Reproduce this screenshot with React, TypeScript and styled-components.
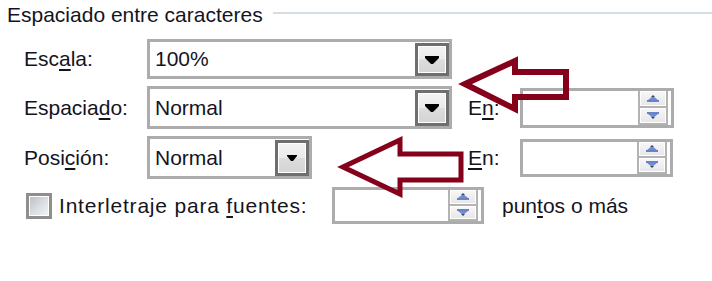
import styled, { createGlobalStyle } from 'styled-components'

const GlobalStyle = createGlobalStyle`
  html, body {
    margin: 0;
    padding: 0;
    background: #ffffff;
  }
  body {
    font-family: 'Liberation Sans', Arial, sans-serif;
    font-size: 21px;
    color: #14141e;
  }
`

const Page = styled.div`
  position: relative;
  width: 712px;
  height: 281px;
  overflow: hidden;
  background: #ffffff;
`

const TitleRow = styled.div`
  display: flex;
  align-items: center;
  height: 30px;
  padding-left: 7px;
`

const Title = styled.span`
  line-height: 30px;
  white-space: nowrap;
`

const TitleLine = styled.div`
  flex: 1;
  height: 2px;
  margin: 0 0 4px 10px;
  background: #d6dee4;
`

const Form = styled.div`
  display: flex;
  flex-direction: column;
  gap: 7px;
  margin-top: 9px;
  padding-left: 24px;
`

const FieldRow = styled.div<{ $height: number }>`
  display: grid;
  grid-template-columns: 123px 321px 52px 154px;
  align-items: center;
  height: ${(p) => p.$height}px;
`

const Label = styled.span<{ $wide?: boolean }>`
  white-space: nowrap;
  letter-spacing: ${(p) => (p.$wide ? '0.8px' : '0')};

  u {
    text-decoration-thickness: 2px;
    text-underline-offset: 3px;
  }
`

const SelectBox = styled.div<{ $width: number; $height: number }>`
  box-sizing: border-box;
  display: flex;
  align-items: center;
  width: ${(p) => p.$width}px;
  height: ${(p) => p.$height}px;
  border: 3px solid #acacac;
  background: #ffffff;
`

const SelectValue = styled.span`
  flex: 1;
  padding-left: 5px;
  white-space: nowrap;
`

const DropButton = styled.div`
  box-sizing: border-box;
  display: flex;
  align-items: center;
  justify-content: center;
  align-self: stretch;
  width: 34px;
  margin: 1px 0 0;
  border: 3px solid #6e6e6e;
  box-shadow: inset 0 0 0 1px #ffffff;
  background: linear-gradient(#f3f3f3 0%, #ebebeb 48%, #dcdcdc 52%, #d4d4d4 100%);
`

const SpinBox = styled.div<{ $width: number; $height: number }>`
  box-sizing: border-box;
  display: flex;
  justify-content: flex-end;
  width: ${(p) => p.$width}px;
  height: ${(p) => p.$height}px;
  border: 3px solid #acacac;
  background: #ffffff;
`

const SpinGroup = styled.div`
  box-sizing: border-box;
  display: flex;
  flex-direction: column;
  gap: 2px;
  width: 30px;
  margin-right: 3px;
  border: 2px solid #b3b3b3;
  border-top: 0;
  background: #b3b3b3;
`

const SpinButton = styled.div`
  flex: 1;
  display: flex;
  align-items: center;
  justify-content: center;
  box-shadow: inset 0 0 0 1px #ffffff;
  background: linear-gradient(#f8f8f8, #e6e6e6);
`

const CheckRow = styled.div`
  display: flex;
  align-items: center;
  height: 39px;
  padding-left: 2px;
`

const CheckBox = styled.div`
  box-sizing: border-box;
  width: 26px;
  height: 26px;
  margin-right: 7px;
  border: 3px solid #8e8e8e;
  box-shadow: inset 0 0 0 1px #ffffff;
  background: linear-gradient(135deg, #b9bec7 0%, #d9dce1 50%, #f4f5f6 100%);
`

const CheckLabel = styled(Label)`
  width: 273px;
`

const Suffix = styled(Label)`
  margin-left: 18px;
`

const Overlay = styled.svg`
  position: absolute;
  inset: 0;
  pointer-events: none;
`

const DropGlyph = ({ small }: { small?: boolean }) =>
  small ? (
    <svg width="10" height="6" viewBox="0 0 10 6">
      <polygon points="0,0 10,0 10,1 6,6 4,6 0,1" fill="#000" />
    </svg>
  ) : (
    <svg width="14" height="8" viewBox="0 0 14 8">
      <polygon points="0,0 14,0 14,2 8,8 6,8 0,2" fill="#000" />
    </svg>
  )

const SpinGlyph = ({ down }: { down?: boolean }) => (
  <svg width="14" height="7" viewBox="0 0 14 7" style={down ? { transform: 'scaleY(-1)' } : undefined}>
    <polygon points="7,1 12,5 2,5" fill="#6f8bd2" />
    <rect x="1" y="5" width="12" height="2" fill="#6683cc" />
    <polygon points="7,0 9,2 5,2" fill="#3a466e" />
  </svg>
)

const Select = ({ value, width, height, small }: { value: string; width: number; height: number; small?: boolean }) => (
  <SelectBox $width={width} $height={height}>
    <SelectValue>{value}</SelectValue>
    <DropButton>
      <DropGlyph small={small} />
    </DropButton>
  </SelectBox>
)

const Spin = ({ width, height }: { width: number; height: number }) => (
  <SpinBox $width={width} $height={height}>
    <SpinGroup>
      <SpinButton>
        <SpinGlyph />
      </SpinButton>
      <SpinButton>
        <SpinGlyph down />
      </SpinButton>
    </SpinGroup>
  </SpinBox>
)

export default function App() {
  return (
    <Page>
      <GlobalStyle />
      <TitleRow>
        <Title>Espaciado entre caracteres</Title>
        <TitleLine />
      </TitleRow>

      <Form>
        <FieldRow $height={40}>
          <Label>
            Esc<u>a</u>la:
          </Label>
          <Select value="100%" width={305} height={40} />
        </FieldRow>

        <FieldRow $height={43}>
          <Label>
            Espacia<u>d</u>o:
          </Label>
          <Select value="Normal" width={305} height={43} />
          <Label>
            E<u>n</u>:
          </Label>
          <Spin width={154} height={40} />
        </FieldRow>

        <FieldRow $height={43}>
          <Label>
            Posi<u>c</u>ión:
          </Label>
          <Select value="Normal" width={165} height={43} small />
          <Label>
            <u>E</u>n:
          </Label>
          <Spin width={153} height={38} />
        </FieldRow>

        <CheckRow>
          <CheckBox />
          <CheckLabel $wide>
            Interletraje para <u>f</u>uentes:
          </CheckLabel>
          <Spin width={152} height={37} />
          <Suffix>
            pun<u>t</u>os o más
          </Suffix>
        </CheckRow>
      </Form>

      <Overlay width="712" height="281" viewBox="0 0 712 281">
        <polygon
          points="465,84 515,61 515,72 566,72 566,97 515,97 515,109"
          fill="none"
          stroke="#85001b"
          strokeWidth="6"
          strokeLinejoin="miter"
        />
        <polygon
          points="343,167 400,140 400,154 461,154 461,180 400,180 400,194"
          fill="none"
          stroke="#85001b"
          strokeWidth="5"
          strokeLinejoin="miter"
        />
      </Overlay>
    </Page>
  )
}
